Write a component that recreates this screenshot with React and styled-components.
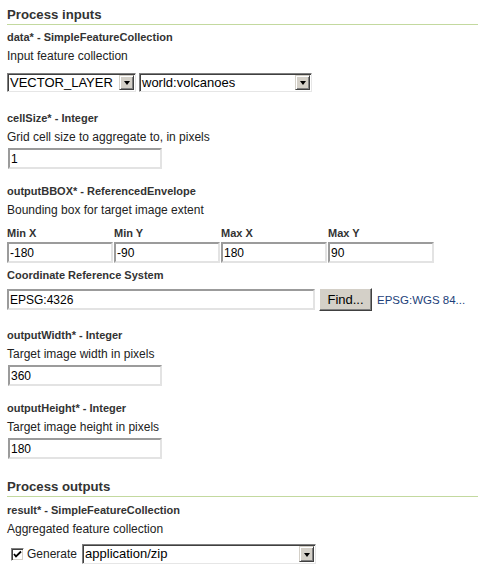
import React from "react";
import styled, { createGlobalStyle } from "styled-components";

const GlobalStyle = createGlobalStyle`
  body {
    margin: 0;
    background: #fff;
    font-family: "Liberation Sans", Arial, sans-serif;
    color: #333;
  }
`;

const Page = styled.div`
  padding: 0 0 0 7px;
`;

const SectionTitle = styled.h2`
  margin: ${props => (props.$first ? "6px" : "19px")} 0 0;
  padding: 0 0 1px;
  font-size: 13.2px;
  line-height: 17px;
  font-weight: bold;
  color: #333;
  border-bottom: 1px solid #c3d99f;
`;

const Param = styled.div`
  margin-top: ${props => props.$gap}px;
`;

const ParamName = styled.div`
  font-size: 11px;
  line-height: 14px;
  font-weight: bold;
  color: #333;
`;

const Description = styled.div`
  margin-top: 5px;
  font-size: 12px;
  line-height: 14px;
  color: #222;
`;

const Row = styled.div`
  display: flex;
  align-items: center;
  gap: ${props => props.$gap || 0}px;
  margin-top: ${props => props.$top || 0}px;
  margin-left: ${props => props.$left || 0}px;
`;

const SelectBox = styled.div`
  box-sizing: border-box;
  display: flex;
  align-items: stretch;
  width: ${props => props.$w}px;
  height: ${props => props.$h || 19}px;
  padding: 1px;
  background: #fff;
  border: 1px solid;
  border-color: #7f7f7f #e6e6e6 #e6e6e6 #7f7f7f;
  box-shadow: inset 1px 1px #404040;
`;

const SelectValue = styled.span`
  flex: 1;
  padding-left: 1px;
  font-size: 13px;
  line-height: ${props => (props.$h || 19) - 4}px;
  color: #000;
  white-space: nowrap;
  overflow: hidden;
`;

const DropButton = styled.span`
  box-sizing: border-box;
  width: 15px;
  display: flex;
  align-items: center;
  justify-content: center;
  background: #d4d0c8;
  border: 1px solid;
  border-color: #d4d0c8 #404040 #404040 #d4d0c8;
  box-shadow: inset 1px 1px #fff, inset -1px -1px #808080;

  &::after {
    content: "";
    border-left: 3.5px solid transparent;
    border-right: 3.5px solid transparent;
    border-top: 4px solid #000;
    margin-top: 1px;
  }
`;

const TextInput = styled.input`
  box-sizing: border-box;
  display: block;
  width: ${props => props.$w}px;
  height: 21px;
  margin: ${props => props.$top || 0}px 0 0 ${props => props.$left || 0}px;
  padding: 0 1px;
  background: #fff;
  border: 2px solid;
  border-color: #9b9b9b #e3e3e3 #e3e3e3 #9b9b9b;
  font-family: "Liberation Sans", Arial, sans-serif;
  font-size: 12px;
  color: #000;
  outline: none;
`;

const BBoxGrid = styled.div`
  display: grid;
  grid-template-columns: repeat(4, 106px);
  column-gap: 1px;
  row-gap: 2px;
  margin-top: 9px;
`;

const BBoxLabel = styled.div`
  font-size: 11px;
  line-height: 14px;
  font-weight: bold;
  color: #333;
`;

const SubLabel = styled(BBoxLabel)`
  margin-top: 5px;
`;

const FindButton = styled.button`
  box-sizing: border-box;
  width: 53px;
  height: 23px;
  margin: 0;
  padding: 0;
  background: #d4d0c8;
  border: 1px solid;
  border-color: #fff #404040 #404040 #fff;
  box-shadow: inset -1px -1px #808080;
  font-family: "Liberation Sans", Arial, sans-serif;
  font-size: 13px;
  color: #000;
`;

const CrsLink = styled.a`
  margin-left: 1px;
  font-size: 11.5px;
  color: #1d3f7a;
  text-decoration: none;
`;

const CheckBox = styled.span`
  box-sizing: border-box;
  display: inline-flex;
  align-items: center;
  justify-content: center;
  width: 13px;
  height: 13px;
  background: #fff;
  border: 1px solid;
  border-color: #808080 #fff #fff #808080;
  box-shadow: inset 1px 1px #404040, inset -1px -1px #d4d0c8;
`;

const CheckLabel = styled.span`
  margin: 0 5px 0 3px;
  font-size: 12px;
  color: #222;
`;

function Select({ value, width, height }) {
  return (
    <SelectBox $w={width} $h={height}>
      <SelectValue $h={height}>{value}</SelectValue>
      <DropButton />
    </SelectBox>
  );
}

function App() {
  return (
    <Page>
      <GlobalStyle />
      <SectionTitle $first>Process inputs</SectionTitle>

      <Param $gap={5}>
        <ParamName>data* - SimpleFeatureCollection</ParamName>
        <Description>Input feature collection</Description>
        <Row $top={10} $gap={3}>
          <Select value="VECTOR_LAYER" width={129} />
          <Select value="world:volcanoes" width={173} />
        </Row>
      </Param>

      <Param $gap={19}>
        <ParamName>cellSize* - Integer</ParamName>
        <Description>Grid cell size to aggregate to, in pixels</Description>
        <TextInput $w={154} $top={4} $left={1} defaultValue="1" />
      </Param>

      <Param $gap={15}>
        <ParamName>outputBBOX* - ReferencedEnvelope</ParamName>
        <Description>Bounding box for target image extent</Description>
        <BBoxGrid>
          <BBoxLabel>Min X</BBoxLabel>
          <BBoxLabel>Min Y</BBoxLabel>
          <BBoxLabel>Max X</BBoxLabel>
          <BBoxLabel>Max Y</BBoxLabel>
          <TextInput $w={106} defaultValue="-180" />
          <TextInput $w={106} defaultValue="-90" />
          <TextInput $w={106} defaultValue="180" />
          <TextInput $w={106} defaultValue="90" />
        </BBoxGrid>
        <SubLabel>Coordinate Reference System</SubLabel>
        <Row $top={6} $gap={4}>
          <TextInput $w={308} defaultValue="EPSG:4326" />
          <FindButton>Find...</FindButton>
          <CrsLink href="#">EPSG:WGS 84...</CrsLink>
        </Row>
      </Param>

      <Param $gap={17}>
        <ParamName>outputWidth* - Integer</ParamName>
        <Description>Target image width in pixels</Description>
        <TextInput $w={154} $top={4} $left={1} defaultValue="360" />
      </Param>

      <Param $gap={15}>
        <ParamName>outputHeight* - Integer</ParamName>
        <Description>Target image height in pixels</Description>
        <TextInput $w={154} $top={4} $left={1} defaultValue="180" />
      </Param>

      <SectionTitle>Process outputs</SectionTitle>

      <Param $gap={6}>
        <ParamName>result* - SimpleFeatureCollection</ParamName>
        <Description>Aggregated feature collection</Description>
        <Row $top={8} $left={4}>
          <CheckBox>
            <svg width="9" height="9" viewBox="0 0 9 9">
              <path d="M1 4 L3 6.5 L8 1.5" stroke="#000" strokeWidth="1.8" fill="none" />
            </svg>
          </CheckBox>
          <CheckLabel>Generate</CheckLabel>
          <Select value="application/zip" width={234} height={20} />
        </Row>
      </Param>
    </Page>
  );
}

export default App;
